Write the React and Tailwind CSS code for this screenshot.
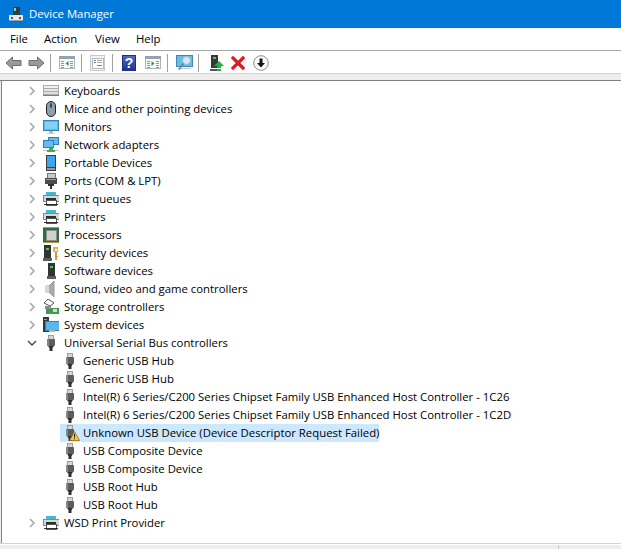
import React from "react";

function Svg({ w = 16, h = 16, children }) {
	return (
		<svg width={w} height={h} viewBox={`0 0 ${w} ${h}`} className="block shrink-0" shapeRendering="crispEdges">
			{children}
		</svg>
	);
}

function TitleIcon() {
	return (
		<Svg w={16} h={16}>
			<rect x="5" y="1" width="7" height="8" fill="#3a3a3a" />
			<rect x="6" y="2" width="2" height="3" fill="#8fd08f" />
			<rect x="1" y="9" width="14" height="6" fill="#e8e8e8" />
			<rect x="1" y="14" width="14" height="1" fill="#9a9a9a" />
			<rect x="3" y="11" width="2" height="2" fill="#555" />
			<rect x="11" y="11" width="2" height="2" fill="#555" />
		</Svg>
	);
}

function Arrow({ flip }) {
	return (
		<svg width="17" height="14" viewBox="0 0 17 14" className={flip ? "block shrink-0 -scale-x-100" : "block shrink-0"}>
			<path d="M1 7 7.5 1v3.5H16v5H7.5V13z" fill="#9a9a9a" stroke="#6e6e6e" strokeWidth="1" />
		</svg>
	);
}

function PaneIcon({ side }) {
	const rows = [5, 7, 9, 11];
	return (
		<Svg w={16} h={13}>
			<rect x="0" y="0" width="16" height="13" fill="#fbfbfb" />
			<rect x="0" y="0" width="16" height="3" fill="#93a3b2" />
			<rect x="0" y="3" width="1" height="10" fill="#a9b5c0" />
			<rect x="15" y="3" width="1" height="10" fill="#a9b5c0" />
			<rect x="0" y="12" width="16" height="1" fill="#a9b5c0" />
			{rows.map((y) => (
				<React.Fragment key={y}>
					<rect x="2" y={y} width="3" height="1" fill="#7f9ab3" />
					<rect x="11" y={y} width="3" height="1" fill="#7f9ab3" />
				</React.Fragment>
			))}
			{side === "left" ? (
				<path d="M9.5 5v5L6.5 7.5z" fill="#2f9a45" shapeRendering="auto" />
			) : (
				<path d="M6.5 5v5l3-2.5z" fill="#2f9a45" shapeRendering="auto" />
			)}
		</Svg>
	);
}

function PropsIcon() {
	return (
		<Svg w={15} h={16}>
			<rect x="0" y="0" width="15" height="16" fill="#c9c9c9" />
			<rect x="1" y="1" width="13" height="14" fill="#f3f3f3" />
			<rect x="2" y="3" width="11" height="10" fill="#fff" stroke="#b8b8b8" />
			<rect x="4" y="5" width="2" height="1" fill="#5b87b5" />
			<rect x="7" y="5" width="5" height="1" fill="#a6a6a6" />
			<rect x="4" y="7" width="2" height="1" fill="#5b87b5" />
			<rect x="7" y="7" width="5" height="1" fill="#a6a6a6" />
			<rect x="7" y="10" width="5" height="1" fill="#3a8fd8" />
		</Svg>
	);
}

function HelpIcon() {
	return (
		<div className="flex h-4 w-[14px] shrink-0 items-center justify-center border border-[#1c2f80] bg-gradient-to-b from-[#4c6cc4] to-[#1f3590]">
			<span className="font-['Liberation_Sans',sans-serif] text-[14px] leading-none font-bold text-white">?</span>
		</div>
	);
}

function ScanIcon() {
	return (
		<svg width="17" height="16" viewBox="0 0 17 16" className="block shrink-0">
			<rect x="0.5" y="0.5" width="16" height="11" fill="#6cbce8" stroke="#3f88b3" />
			<rect x="2" y="13" width="13" height="1" fill="#c2cbd1" />
			<circle cx="10.5" cy="5.5" r="4" fill="#cfeaf7" stroke="#8fb4c9" strokeWidth="0.8" />
			<path d="M7.5 8.5 3 14.5" stroke="#6d7f8c" strokeWidth="1.5" />
		</svg>
	);
}

function UpdateIcon() {
	return (
		<Svg w={14} h={16}>
			<rect x="1" y="0" width="7" height="13" fill="#35393b" />
			<rect x="3" y="2" width="3" height="2" fill="#48d048" />
			<rect x="0" y="14" width="7" height="2" fill="#555" />
			<path d="M9 6 14 11H11V13H7V11H4z" fill="#19b53a" shapeRendering="auto" />
			<rect x="7" y="14" width="4" height="2" fill="#19b53a" />
		</Svg>
	);
}

function RemoveIcon() {
	return (
		<svg width="14" height="14" viewBox="0 0 14 14" className="block shrink-0">
			<path d="M2 2 12 12M12 2 2 12" stroke="#dc1a20" strokeWidth="3.2" strokeLinecap="square" />
		</svg>
	);
}

function DownIcon() {
	return (
		<svg width="16" height="16" viewBox="0 0 16 16" className="block shrink-0">
			<circle cx="8" cy="8" r="7.3" fill="#fbfbfb" stroke="#8c8c8c" />
			<path d="M6.5 3.5h3V8H12L8 12.5 4 8h2.5z" fill="#141414" />
		</svg>
	);
}

function Sep() {
	return <div className="h-[18px] w-px shrink-0 bg-[#a0a0a0]" />;
}

function Chevron({ open }) {
	return (
		<svg width="10" height="10" viewBox="0 0 10 10" className="block shrink-0">
			{open ? (
				<path d="M1 3 5 7 9 3" fill="none" stroke="#404040" strokeWidth="1.3" />
			) : (
				<path d="M3 1 7 5 3 9" fill="none" stroke="#a6a6a6" strokeWidth="1.5" />
			)}
		</svg>
	);
}

function UsbIcon() {
	return (
		<svg width="10" height="16" viewBox="0 0 10 16" className="block shrink-0">
			<rect x="2.5" y="0.5" width="5" height="4" fill="#d6d6d6" stroke="#8c8c8c" strokeWidth="0.8" />
			<rect x="1" y="4" width="8" height="7" rx="1" fill="#5a5e60" />
			<rect x="1" y="4" width="2" height="7" fill="#83888a" />
			<path d="M2 11h6L6.5 13v3h-3v-3z" fill="#2d2f30" />
		</svg>
	);
}

function WarnUsbIcon() {
	return (
		<div className="relative h-4 w-4 shrink-0">
			<UsbIcon />
			<svg width="11" height="10" viewBox="0 0 11 10" className="absolute left-[4px] top-[6px]">
				<path d="M5.5 0.5 10.5 9.5H0.5z" fill="#f6c244" stroke="#9a6a10" strokeWidth="0.8" />
				<rect x="5" y="3" width="1" height="3.5" fill="#222" />
				<rect x="5" y="7.3" width="1" height="1" fill="#222" />
			</svg>
		</div>
	);
}

function Keyboard() {
	return (
		<Svg w={16} h={16}>
			<rect x="0" y="2" width="16" height="11" fill="#a9adb0" />
			<rect x="1" y="3" width="14" height="2" fill="#eef0f1" />
			<rect x="1" y="6" width="14" height="2" fill="#e6e8ea" />
			<rect x="1" y="9" width="14" height="2" fill="#dcdfe1" />
			<rect x="0" y="12" width="16" height="1" fill="#7c7e80" />
		</Svg>
	);
}

function Mouse() {
	return (
		<svg width="16" height="16" viewBox="0 0 16 16" className="block shrink-0">
			<rect x="3.5" y="0.5" width="9" height="15" rx="4.5" fill="#8f9fb0" stroke="#222" />
			<rect x="7" y="2" width="2" height="5" rx="1" fill="#3c4a58" />
		</svg>
	);
}

function Monitor() {
	return (
		<Svg w={16} h={16}>
			<rect x="0.5" y="1.5" width="15" height="10" fill="#5db9ee" stroke="#3186bd" />
			<rect x="2" y="3" width="12" height="7" fill="#86d0f5" />
			<rect x="6" y="12" width="4" height="2" fill="#b0b6ba" />
			<rect x="4" y="14" width="8" height="1" fill="#cfd3d6" />
		</Svg>
	);
}

function Network() {
	return (
		<Svg w={16} h={16}>
			<rect x="5.5" y="0.5" width="10" height="7" fill="#62bcee" stroke="#2e80b5" />
			<rect x="0.5" y="3.5" width="10" height="7" fill="#62bcee" stroke="#2e80b5" />
			<rect x="0" y="13" width="16" height="1" fill="#c9c9c9" />
			<rect x="6" y="11" width="4" height="2" fill="#3cb04c" />
			<rect x="4" y="13" width="8" height="2" fill="#3cb04c" />
		</Svg>
	);
}

function Portable() {
	return (
		<Svg w={16} h={16}>
			<rect x="3" y="0" width="10" height="16" fill="#3e3e3e" />
			<rect x="4" y="1" width="8" height="11" fill="#3ca6ea" />
			<rect x="4" y="13" width="8" height="2" fill="#9a9a9a" />
		</Svg>
	);
}

function Ports() {
	return (
		<Svg w={16} h={16}>
			<rect x="4" y="0" width="8" height="5" fill="#c9c9c9" stroke="#777" />
			<rect x="2" y="5" width="12" height="6" fill="#4a4d4f" />
			<rect x="3" y="6" width="10" height="1" fill="#9a9da0" />
			<rect x="5" y="11" width="6" height="2" fill="#2f3132" />
			<rect x="7" y="13" width="2" height="3" fill="#2f3132" />
		</Svg>
	);
}

function Printer() {
	return (
		<Svg w={16} h={16}>
			<rect x="3" y="1" width="10" height="4" fill="#45b6ea" />
			<rect x="7" y="2" width="3" height="2" fill="#4cc070" />
			<rect x="0" y="4" width="16" height="6" fill="#d5d7d9" stroke="#85888a" />
			<rect x="3" y="7" width="10" height="2" fill="#2e2e2e" />
			<rect x="3" y="9" width="10" height="5" fill="#fff" stroke="#555" />
			<rect x="1" y="13" width="14" height="1" fill="#2e2e2e" />
		</Svg>
	);
}

function Processor() {
	return (
		<Svg w={16} h={16}>
			<rect x="0" y="0" width="16" height="16" fill="#2f6d46" />
			<rect x="0" y="0" width="16" height="1" fill="#b49a3c" />
			<rect x="0" y="15" width="16" height="1" fill="#b49a3c" />
			<rect x="3" y="3" width="10" height="10" fill="#cfd2d0" stroke="#8c908d" />
		</Svg>
	);
}

function Tower() {
	return (
		<>
			<rect x="1" y="0" width="7" height="13" fill="#303436" />
			<rect x="3" y="3" width="3" height="2" fill="#40d050" />
			<rect x="0" y="13" width="9" height="3" fill="#5a5d5f" />
		</>
	);
}

function Security() {
	return (
		<Svg w={16} h={16}>
			<Tower />
			<rect x="10" y="2" width="5" height="5" fill="#e3b04a" />
			<rect x="11.5" y="3.5" width="2" height="2" fill="#fff" />
			<rect x="12" y="7" width="1.5" height="8" fill="#d49c34" />
			<rect x="13" y="11" width="2" height="1" fill="#d49c34" />
		</Svg>
	);
}

function Software() {
	return (
		<div className="pl-1">
			<Svg w={12} h={16}>
				<Tower />
			</Svg>
		</div>
	);
}

function Sound() {
	return (
		<svg width="16" height="16" viewBox="0 0 16 16" className="block shrink-0">
			<path d="M3 5h3l5-5v16l-5-5H3z" fill="#a8acae" stroke="#8a8e90" strokeWidth="0.8" />
			<rect x="3" y="5" width="3" height="6" fill="#d6d8d9" />
		</svg>
	);
}

function Storage() {
	return (
		<svg width="16" height="16" viewBox="0 0 16 16" className="block shrink-0">
			<path d="M5 0 11 4 7 7 1 4z" fill="#fff" stroke="#555" strokeWidth="1" />
			<rect x="3" y="9" width="13" height="6" fill="#3f9a54" />
			<rect x="2" y="7" width="6" height="3" fill="#8a8a8a" />
			<rect x="10" y="10" width="4" height="3" fill="#d8d8d8" />
		</svg>
	);
}

function System() {
	return (
		<Svg w={16} h={16}>
			<rect x="0" y="0" width="6" height="15" fill="#33373a" />
			<rect x="1" y="2" width="3" height="1" fill="#50d060" />
			<rect x="2" y="4" width="14" height="9" fill="#58b8ee" stroke="#2e86bd" />
			<rect x="6" y="13" width="6" height="2" fill="#aeb4b8" />
		</Svg>
	);
}

const categories = [
	["Keyboards", Keyboard],
	["Mice and other pointing devices", Mouse],
	["Monitors", Monitor],
	["Network adapters", Network],
	["Portable Devices", Portable],
	["Ports (COM & LPT)", Ports],
	["Print queues", Printer],
	["Printers", Printer],
	["Processors", Processor],
	["Security devices", Security],
	["Software devices", Software],
	["Sound, video and game controllers", Sound],
	["Storage controllers", Storage],
	["System devices", System],
];

const usbDevices = [
	"Generic USB Hub",
	"Generic USB Hub",
	"Intel(R) 6 Series/C200 Series Chipset Family USB Enhanced Host Controller - 1C26",
	"Intel(R) 6 Series/C200 Series Chipset Family USB Enhanced Host Controller - 1C2D",
	"Unknown USB Device (Device Descriptor Request Failed)",
	"USB Composite Device",
	"USB Composite Device",
	"USB Root Hub",
	"USB Root Hub",
];

function Category({ label, Icon, open }) {
	return (
		<div className="flex h-[18px] items-center pl-[25px]">
			<Chevron open={open} />
			<div className="ml-[6px] flex w-[16px] justify-center">
				<Icon />
			</div>
			<span className="ml-[5px] whitespace-nowrap">{label}</span>
		</div>
	);
}

export default function App() {
	return (
		<div className="flex h-[549px] w-[621px] flex-col overflow-hidden bg-white font-['Open_Sans','Noto_Sans',sans-serif] text-[11.35px] text-black">
			<div className="flex h-7 shrink-0 items-center gap-[5px] bg-[#0078d7] pb-px pl-[8px] text-white">
				<TitleIcon />
				<span>Device Manager</span>
			</div>
			<div className="flex h-[22px] shrink-0 items-center pl-[10px]">
				<span className="w-[34px]">File</span>
				<span className="w-[51px]">Action</span>
				<span className="w-[41px]">View</span>
				<span>Help</span>
			</div>
			<div className="h-px shrink-0 bg-[#a8a8a8]" />
			<div className="flex h-[22px] shrink-0 items-center pt-px pl-[5px]">
				<Arrow />
				<div className="w-[6px]" />
				<Arrow flip />
				<div className="w-[5px]" />
				<Sep />
				<div className="ml-[8px]"><PaneIcon side="left" /></div>
				<div className="ml-[6px]"><Sep /></div>
				<div className="ml-[8px]"><PropsIcon /></div>
				<div className="ml-[7px]"><Sep /></div>
				<div className="ml-[9px]"><HelpIcon /></div>
				<div className="ml-[9px]"><PaneIcon side="right" /></div>
				<div className="ml-[6px]"><Sep /></div>
				<div className="ml-[8px]"><ScanIcon /></div>
				<div className="ml-[5px]"><Sep /></div>
				<div className="ml-[11px]"><UpdateIcon /></div>
				<div className="ml-[7px]"><RemoveIcon /></div>
				<div className="ml-[8px]"><DownIcon /></div>
			</div>
			<div className="h-px shrink-0 bg-[#d4d4d4]" />
			<div className="h-[6px] shrink-0 bg-[#eeeeee]" />
			<div className="h-px shrink-0 bg-[#808080]" />
			<div className="flex min-h-0 flex-1">
				<div className="w-px shrink-0 bg-[#eeeeee]" />
				<div className="w-px shrink-0 bg-[#808080]" />
				<div className="min-w-0 flex-1 pt-px">
					{categories.map(([label, Icon]) => (
						<Category key={label} label={label} Icon={Icon} />
					))}
					<Category label="Universal Serial Bus controllers" Icon={UsbIcon} open />
					{usbDevices.map((name, i) =>
						i === 4 ? (
							<div key={i} className="ml-[58px] flex h-[18px] w-[319px] items-center bg-[#cce8ff] pl-[5px]">
								<WarnUsbIcon />
								<span className="ml-[2px] whitespace-nowrap">{name}</span>
							</div>
						) : (
							<div key={i} className="flex h-[18px] items-center pl-[63px]">
								<UsbIcon />
								<span className="ml-[8px] whitespace-nowrap">{name}</span>
							</div>
						)
					)}
					<Category label="WSD Print Provider" Icon={Printer} />
				</div>
			</div>
			<div className="h-px shrink-0 bg-[#d4d4d4]" />
			<div className="flex h-[5px] shrink-0 justify-end border-t border-white bg-[#eeeeee]">
				<div className="mr-[62px] w-px bg-[#c8c8c8]" />
			</div>
		</div>
	);
}
